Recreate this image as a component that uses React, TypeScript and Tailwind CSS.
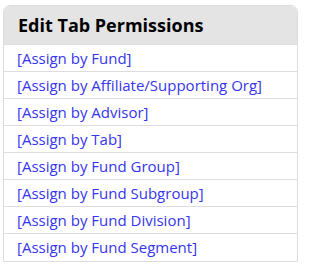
import React from "react";

const items = [
  "[Assign by Fund]",
  "[Assign by Affiliate/Supporting Org]",
  "[Assign by Advisor]",
  "[Assign by Tab]",
  "[Assign by Fund Group]",
  "[Assign by Fund Subgroup]",
  "[Assign by Fund Division]",
  "[Assign by Fund Segment]",
];

export default function App() {
  return (
    <div className="w-[308px] h-[268px] bg-white pt-[5px] pl-[3px]" style={{ fontFamily: '"Open Sans", "Noto Sans", sans-serif' }}>
      <div className="w-[295px] border border-[#dddddd] rounded-t-[7px] overflow-hidden">
        <div className="h-[39px] bg-[#e4e4e4] flex items-center pl-[14px] text-[18px] font-bold text-black border-b border-[#dddddd]">
          Edit Tab Permissions
        </div>
        {items.map((t, i) => (
          <div
            key={t}
            className={`h-[27px] flex items-center pl-[13px] text-[15px] text-[#3535f0] ${i < items.length - 1 ? "border-b border-[#dddddd]" : ""}`}
          >
            <a href="#" className="text-[#3535f0]">{t}</a>
          </div>
        ))}
      </div>
    </div>
  );
}
